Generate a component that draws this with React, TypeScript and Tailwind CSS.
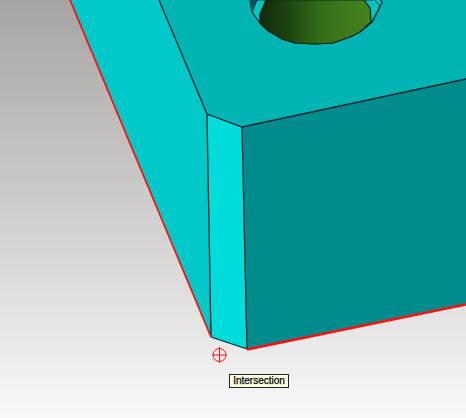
import React from "react";

const Model: React.FC = () => (
  <svg width="466" height="418" viewBox="0 0 466 418" className="block">
    <defs>
      <linearGradient id="cone" x1="260" y1="0" x2="372" y2="0" gradientUnits="userSpaceOnUse">
        <stop offset="0" stopColor="#12290c" />
        <stop offset="0.25" stopColor="#1f4312" />
        <stop offset="0.55" stopColor="#336f1b" />
        <stop offset="1" stopColor="#47851f" />
      </linearGradient>
    </defs>
    {/* faces */}
    <polygon points="70,0 159,0 207,114 211,337" fill="#00c8c8" />
    <polygon points="159,0 466,0 466,79 242,127 207,114" fill="#00b4b4" />
    <polygon points="207,114 242,127 247,349 211,337" fill="#00dcdc" />
    <polygon points="242,127 466,79 466,304 247,349" fill="#008c8c" />
    {/* hole */}
    <polygon
      points="250,0 381,0 382,3 372,22 360,32 350,37 333,43 315,44 295,43 282,39 267,30 260,23 252,12"
      fill="#00c4c4"
      stroke="#06282c"
      strokeWidth="1.2"
    />
    <polygon points="250,0 257,0 252,12" fill="#0a5560" />
    <polygon points="373,0 380,0 378,5" fill="#00d0d0" />
    <polygon
      points="266,0 260,14 260,23 267,30 282,39 295,43 315,44 333,43 350,37 360,32 371,22 370,8 364,0"
      fill="url(#cone)"
      stroke="#0c2412"
      strokeWidth="1.2"
    />
    <g stroke="#06282c" strokeWidth="1" fill="none">
      <line x1="257" y1="0" x2="252" y2="12" />
      <polyline points="375,0 380,6 372,22" />
    </g>
    {/* edges */}
    <g stroke="#04242c" strokeWidth="1.3" fill="none">
      <polyline points="159,0 207,114 242,127 466,79" />
      <line x1="207" y1="114" x2="211" y2="337" />
      <line x1="242" y1="127" x2="247" y2="349" />
      <line x1="211" y1="337" x2="247" y2="349" />
    </g>
    <g stroke="#ff1010" fill="none">
      <line x1="70" y1="0" x2="211" y2="337" strokeWidth="1.8" />
      <line x1="247" y1="349.5" x2="466" y2="304.5" strokeWidth="2.6" />
    </g>
    {/* cursor */}
    <g stroke="#f01818" strokeWidth="1" fill="none">
      <circle cx="219.5" cy="355" r="6.5" />
      <line x1="219.5" y1="347" x2="219.5" y2="363" />
      <line x1="212" y1="355" x2="227" y2="355" />
    </g>
  </svg>
);

export default function App() {
  return (
    <div className="relative w-[466px] h-[418px] overflow-hidden bg-gradient-to-b from-[#a8a4a2] to-[#f9f9f9]">
      <Model />
      <div className="absolute left-[229px] top-[374px] h-[14px] w-[60px] flex items-center justify-center border border-[#222] bg-[#ffffe1] font-['Liberation_Sans',sans-serif] text-[10px] leading-none text-black [-webkit-text-stroke:0.25px_black]">
        Intersection
      </div>
    </div>
  );
}
